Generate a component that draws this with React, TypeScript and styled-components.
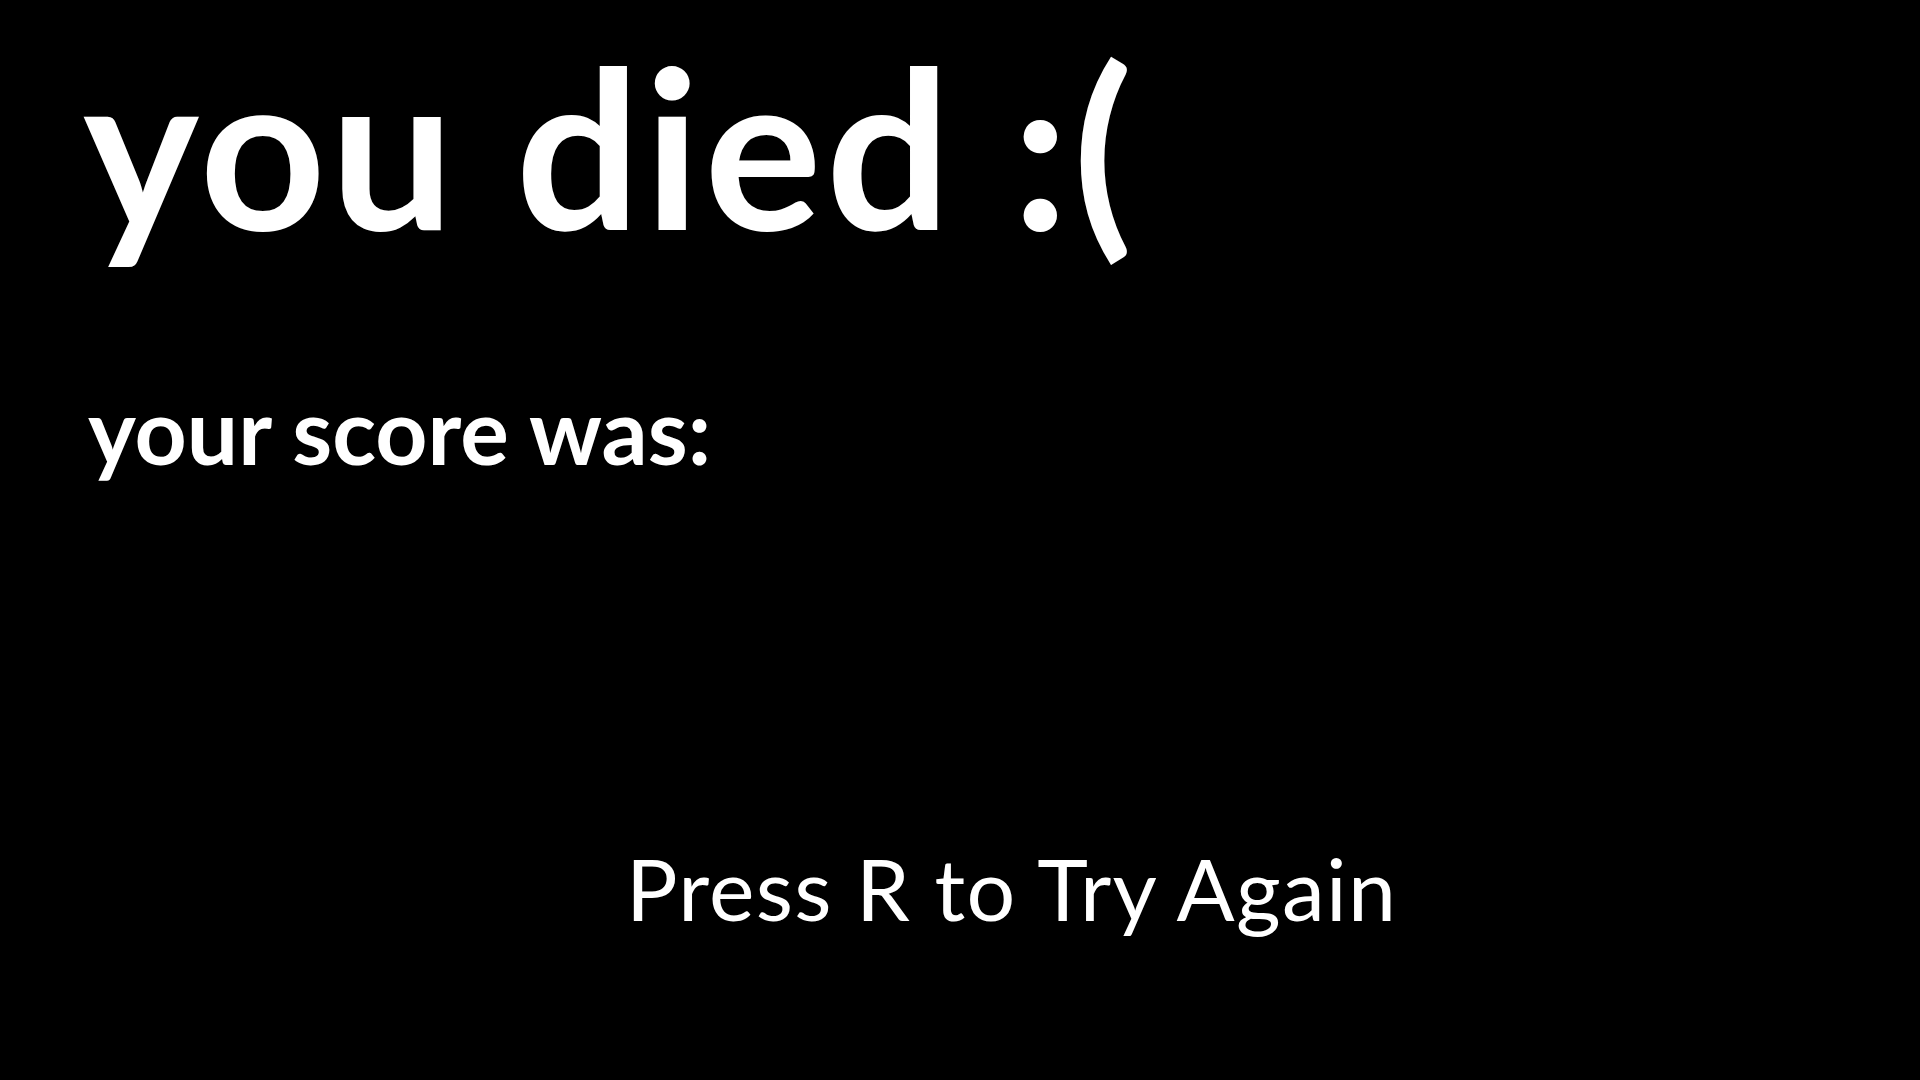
import React from 'react';
import styled, { createGlobalStyle } from 'styled-components';

const GlobalStyle = createGlobalStyle`
  html, body {
    margin: 0;
    padding: 0;
    background: #000;
  }
`;

const Screen = styled.div`
  width: 100vw;
  height: 100vh;
  background: #000;
  color: #fff;
  font-family: Lato, 'Open Sans', sans-serif;
  display: flex;
  flex-direction: column;
  overflow: hidden;
`;

const Title = styled.h1`
  margin: 35px 0 0 83px;
  font-size: 220px;
  font-weight: 700;
  letter-spacing: 4px;
  line-height: 1;
  white-space: nowrap;
`;

const Score = styled.h2`
  margin: 129px 0 0 88px;
  font-size: 91px;
  font-weight: 700;
  line-height: 1;
  white-space: nowrap;
`;

const Prompt = styled.p`
  margin: 370px 0 0 626px;
  font-size: 86px;
  font-weight: 400;
  letter-spacing: 1.3px;
  line-height: 1;
  white-space: nowrap;
`;

export default function App() {
  return (
    <>
      <GlobalStyle />
      <Screen>
        <Title>you died :(</Title>
        <Score>your score was:</Score>
        <Prompt>Press R to Try Again</Prompt>
      </Screen>
    </>
  );
}
